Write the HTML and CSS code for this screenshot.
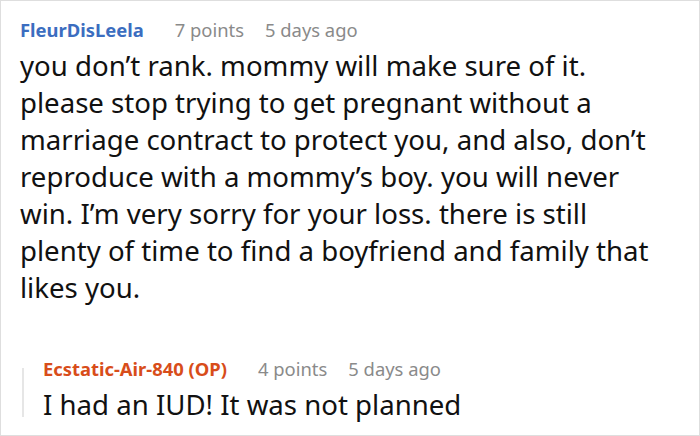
FILE: index.html
```html
<!DOCTYPE html>
<html>
<head>
<meta charset="utf-8">
<link rel="stylesheet" href="styles.css">
</head>
<body>
<div class="frame">
  <div class="comment">
    <div class="meta">
      <span class="author">FleurDisLeela</span>
      <span class="info">7 points</span>
      <span class="info">5 days ago</span>
    </div>
    <p class="text">you don’t rank. mommy will make sure of it. please stop trying to get pregnant without a marriage contract to protect you, and also, don’t reproduce with a mommy’s boy. you will never win. I’m very sorry for your loss. there is still plenty of time to find a boyfriend and family that likes you.</p>
    <div class="reply">
      <div class="bar"></div>
      <div class="reply-body">
        <div class="meta">
          <span class="author op">Ecstatic-Air-840 (OP)</span>
          <span class="info">4 points</span>
          <span class="info">5 days ago</span>
        </div>
        <p class="text">I had an IUD! It was not planned</p>
      </div>
    </div>
  </div>
</div>
</body>
</html>
```
FILE: styles.css
```css
html, body {
  margin: 0;
  padding: 0;
  background: #fff;
}
.frame {
  width: 700px;
  height: 436px;
  box-sizing: border-box;
  border: 1px solid #dedede;
  overflow: hidden;
  font-family: "Noto Sans", "Open Sans", sans-serif;
}
.comment {
  padding: 17px 28px 0 19px;
}
.meta {
  display: flex;
  gap: 21px;
  font-size: 18.4px;
  line-height: 24px;
  white-space: nowrap;
}
.author {
  font-weight: 700;
  color: #3b6dc0;
  margin-right: 10px;
}
.author.op {
  color: #d84d1a;
}
.info {
  color: #8a8a8a;
}
.text {
  margin: 5px 0 0 0;
  font-size: 27.6px;
  line-height: 37px;
  color: #111;
}
.reply {
  display: flex;
  margin-top: 51px;
}
.bar {
  width: 2px;
  flex: none;
  background: #e6e6e6;
  margin: 11px 19px 6px 2px;
}
.reply-body {
  flex: 1;
}
```
